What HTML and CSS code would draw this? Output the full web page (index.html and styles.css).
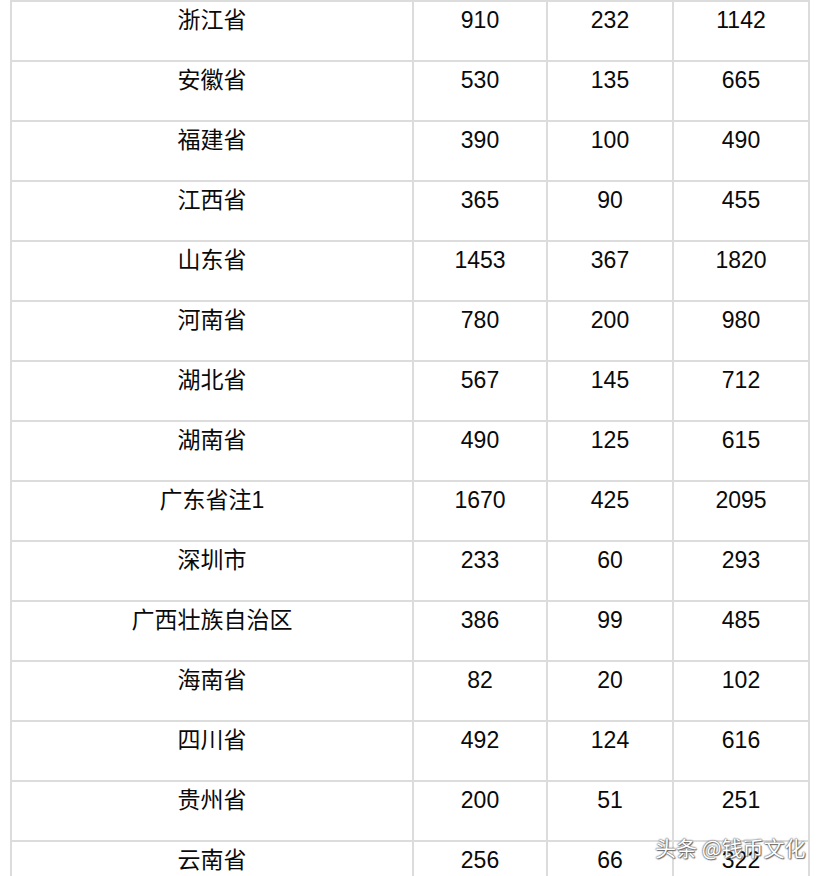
FILE: index.html
```html
<!DOCTYPE html>
<html lang="zh">
<head>
<meta charset="utf-8">
<title>table</title>
<link rel="stylesheet" href="styles.css">
</head>
<body>
<div class="page">
<table class="data">
<colgroup><col class="c1"><col class="c2"><col class="c3"><col class="c4"></colgroup>
<tbody>
<tr><td>浙江省</td><td>910</td><td>232</td><td>1142</td></tr>
<tr><td>安徽省</td><td>530</td><td>135</td><td>665</td></tr>
<tr><td>福建省</td><td>390</td><td>100</td><td>490</td></tr>
<tr><td>江西省</td><td>365</td><td>90</td><td>455</td></tr>
<tr><td>山东省</td><td>1453</td><td>367</td><td>1820</td></tr>
<tr><td>河南省</td><td>780</td><td>200</td><td>980</td></tr>
<tr><td>湖北省</td><td>567</td><td>145</td><td>712</td></tr>
<tr><td>湖南省</td><td>490</td><td>125</td><td>615</td></tr>
<tr><td>广东省注1</td><td>1670</td><td>425</td><td>2095</td></tr>
<tr><td>深圳市</td><td>233</td><td>60</td><td>293</td></tr>
<tr><td>广西壮族自治区</td><td>386</td><td>99</td><td>485</td></tr>
<tr><td>海南省</td><td>82</td><td>20</td><td>102</td></tr>
<tr><td>四川省</td><td>492</td><td>124</td><td>616</td></tr>
<tr><td>贵州省</td><td>200</td><td>51</td><td>251</td></tr>
<tr><td>云南省</td><td>256</td><td>66</td><td>322</td></tr>
</tbody>
</table>
<div class="watermark">头条 @钱币文化</div>
</div>
</body>
</html>
```

FILE: styles.css
```css
html, body {
  margin: 0;
  padding: 0;
  background: #ffffff;
}
.page {
  position: relative;
  width: 826px;
  height: 876px;
  overflow: hidden;
  padding-left: 10px;
  box-sizing: border-box;
}
.data {
  border-collapse: collapse;
  table-layout: fixed;
  width: 798px;
  font-family: "Liberation Sans", "Noto Sans CJK SC", sans-serif;
  font-size: 23px;
  color: #0a0a0a;
}
.c1 { width: 402px; }
.c2 { width: 134px; }
.c3 { width: 126px; }
.c4 { width: 136px; }
.data td {
  border: 2px solid #dcdcdc;
  height: 60px;
  box-sizing: border-box;
  padding: 3px 0 0;
  line-height: 30px;
  text-align: center;
  vertical-align: top;
}
.watermark {
  position: absolute;
  left: 655px;
  top: 832px;
  font-family: "Noto Sans CJK SC", sans-serif;
  font-size: 21px;
  line-height: 30px;
  color: #ffffff;
  text-shadow: 0 0 1px #555, 0 0 2px #555, 1px 1px 1px #777;
  white-space: nowrap;
}
```
